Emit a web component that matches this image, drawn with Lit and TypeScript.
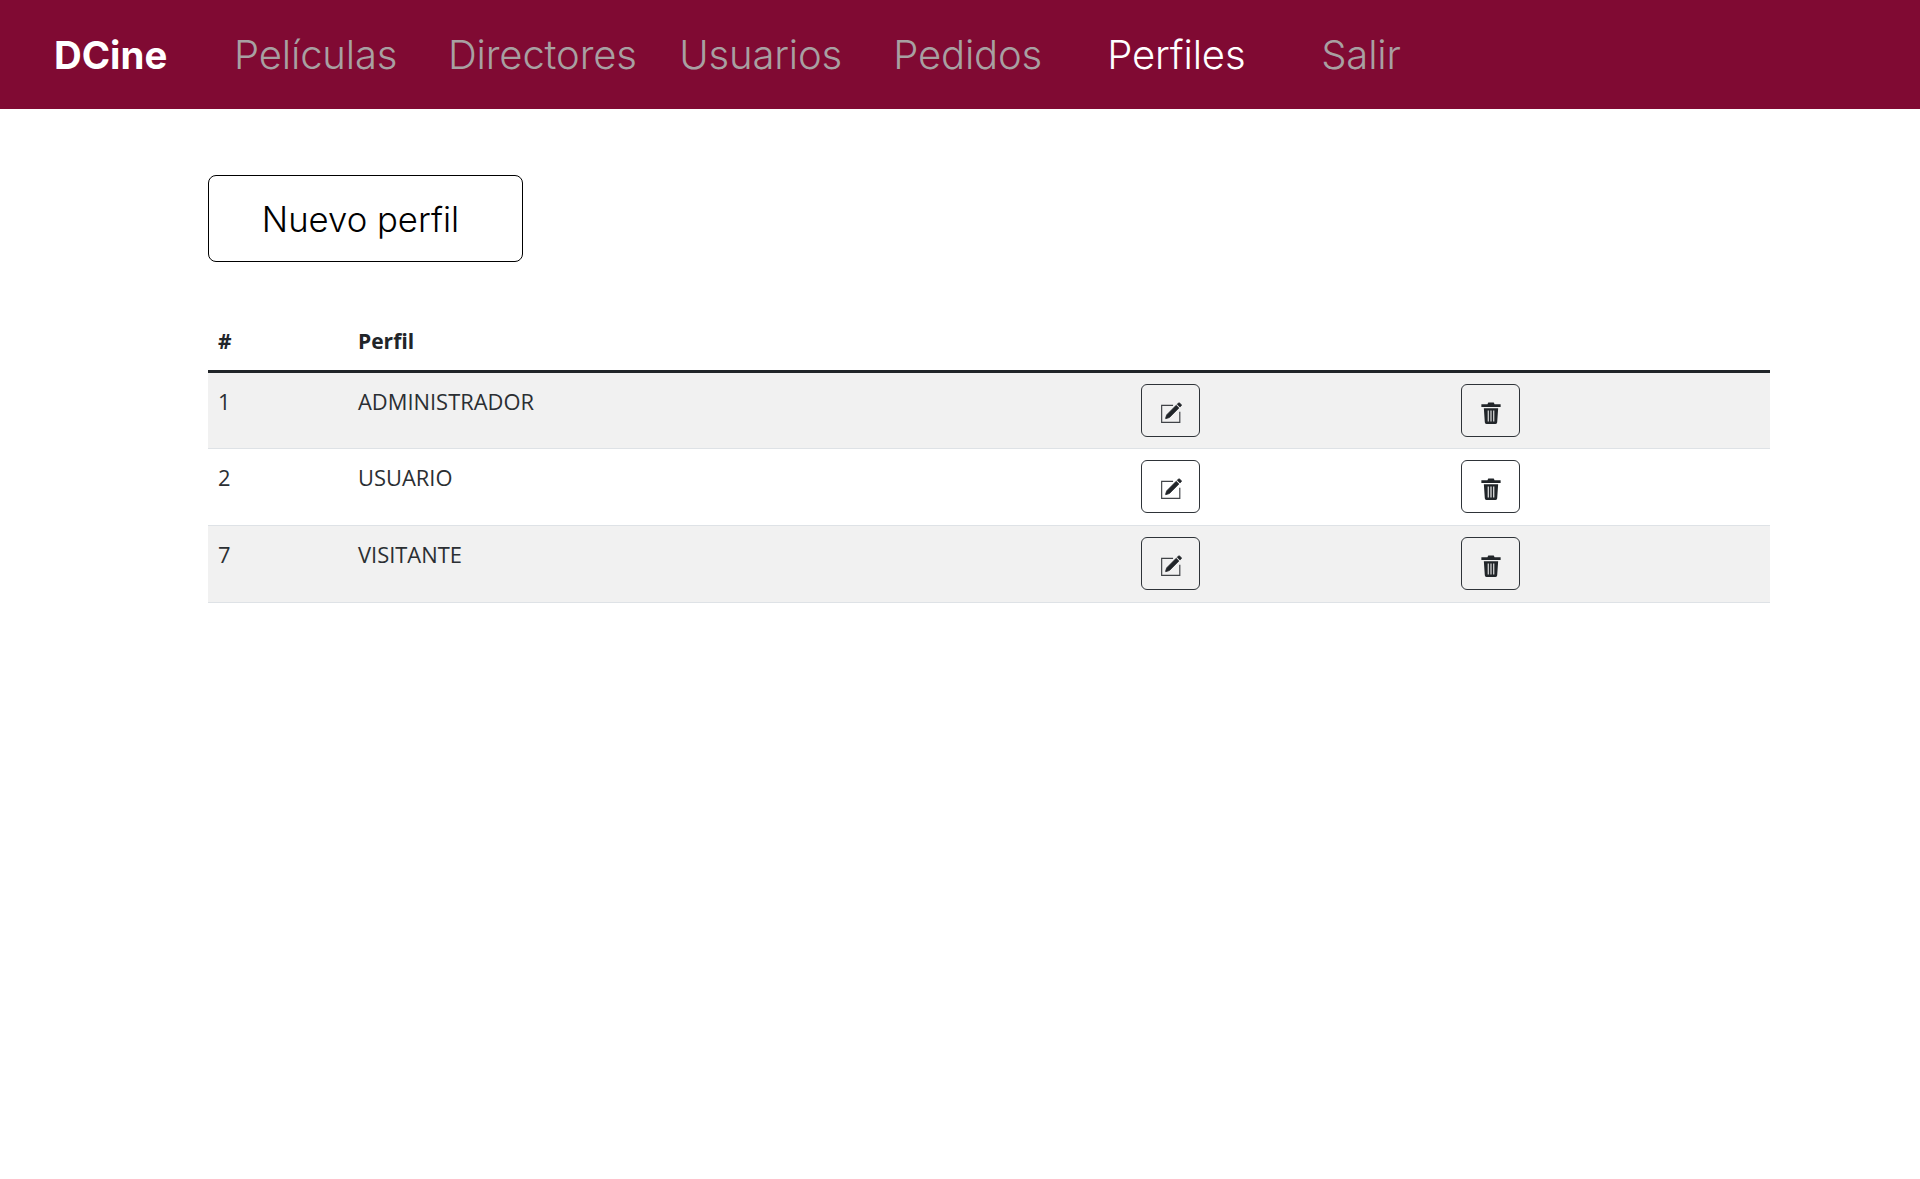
import { LitElement, html, css, svg } from 'lit';
import { customElement } from 'lit/decorators.js';

const links = ['Películas', 'Directores', 'Usuarios', 'Pedidos', 'Perfiles', 'Salir'];
const perfiles = [
  { id: 1, nombre: 'ADMINISTRADOR' },
  { id: 2, nombre: 'USUARIO' },
  { id: 7, nombre: 'VISITANTE' },
];

const pencil = svg`
  <path stroke="currentColor" stroke-width=".5" d="M15.502 1.94a.5.5 0 0 1 0 .706L14.459 3.69l-2-2L13.502.646a.5.5 0 0 1 .707 0l1.293 1.293zm-1.75 2.456-2-2L4.939 9.21a.5.5 0 0 0-.121.196l-.805 2.414a.25.25 0 0 0 .316.316l2.414-.805a.5.5 0 0 0 .196-.12l6.813-6.814z"/>
  <path fill="none" stroke="currentColor" stroke-width=".85" opacity=".85" d="M9.5 2.4H1.2v12.4h13.2V7"/>`;

const trash = svg`
  <path fill-rule="evenodd" d="M6 .4h4l.6 1.3H15v1.9H1V1.7h4.4zM2.8 4.6h10.4l-.7 10.2a1.2 1.2 0 0 1-1.2 1.2H4.7a1.2 1.2 0 0 1-1.2-1.2zM5.6 6.2v7.9h.8V6.2zm2 0v7.9h.8V6.2zm2 0v7.9h.8V6.2z"/>`;

@customElement('app-root')
export class AppRoot extends LitElement {
  static styles = css`
    :host {
      display: block;
      min-height: 1179px;
      background: #fff;
    }
    header {
      background-color: #800a33;
      display: flex;
      align-items: center;
      height: 109px;
      padding-left: 54px;
      font-family: "Inter", sans-serif;
      font-size: 40px;
    }
    .brand {
      color: #fff;
      font-size: 38.4px;
      font-weight: 700;
      width: 180px;
    }
    .link {
      color: #a8a0a2;
      font-weight: 300;
      letter-spacing: -0.15px;
      min-width: 214px;
      padding-right: 42.5px;
      box-sizing: border-box;
    }
    .link.active {
      color: #fff;
    }
    main {
      padding: 66px 150px 0 208px;
    }
    .nuevo {
      display: block;
      width: 315px;
      height: 87px;
      box-sizing: border-box;
      border: 1px solid #000;
      border-radius: 8px;
      background: #fff;
      color: #000;
      font-family: "Inter", sans-serif;
      font-weight: 300;
      font-size: 34.7px;
      padding: 0 10px 0 0;
    }
    table {
      width: 1562px;
      margin-top: 50px;
      border-collapse: collapse;
      table-layout: fixed;
      font-family: "Open Sans", sans-serif;
      font-size: 21.9px;
      color: #2b2f33;
    }
    th {
      text-align: left;
      padding: 10px;
      height: 38px;
      font-size: 21px;
      font-weight: 700;
      color: #212529;
      border-bottom: 3px solid #212529;
    }
    td {
      padding: 11px 10px 10px;
      vertical-align: top;
      border-bottom: 1px solid #dee2e6;
      line-height: 20px;
    }
    td.txt {
      padding-top: 19px;
      padding-bottom: 0;
    }
    tbody tr {
      height: 77px;
    }
    tbody tr:nth-child(odd) td {
      background: #f1f1f1;
    }
    .icon {
      display: flex;
      align-items: center;
      justify-content: center;
      width: 59px;
      height: 53px;
      box-sizing: border-box;
      border: 1.5px solid #2e3338;
      border-radius: 6px;
      background: transparent;
      padding: 5px 0 0;
      color: #212529;
    }
    .icon svg {
      width: 22px;
      height: 22px;
      fill: currentColor;
    }
  `;

  render() {
    return html`
      <header>
        <div class="brand">DCine</div>
        ${links.map(l => html`<a class="link ${l === 'Perfiles' ? 'active' : ''}">${l}</a>`)}
      </header>
      <main>
        <button class="nuevo">Nuevo perfil</button>
        <table>
          <colgroup>
            <col style="width: 140px" />
            <col style="width: 783px" />
            <col style="width: 320px" />
            <col />
          </colgroup>
          <thead>
            <tr>
              <th>#</th>
              <th>Perfil</th>
              <th></th>
              <th></th>
            </tr>
          </thead>
          <tbody>
            ${perfiles.map(p => html`
              <tr>
                <td class="txt">${p.id}</td>
                <td class="txt">${p.nombre}</td>
                <td><button class="icon"><svg viewBox="0 0 16 16">${pencil}</svg></button></td>
                <td><button class="icon"><svg viewBox="0 0 16 16">${trash}</svg></button></td>
              </tr>
            `)}
          </tbody>
        </table>
      </main>
    `;
  }
}
